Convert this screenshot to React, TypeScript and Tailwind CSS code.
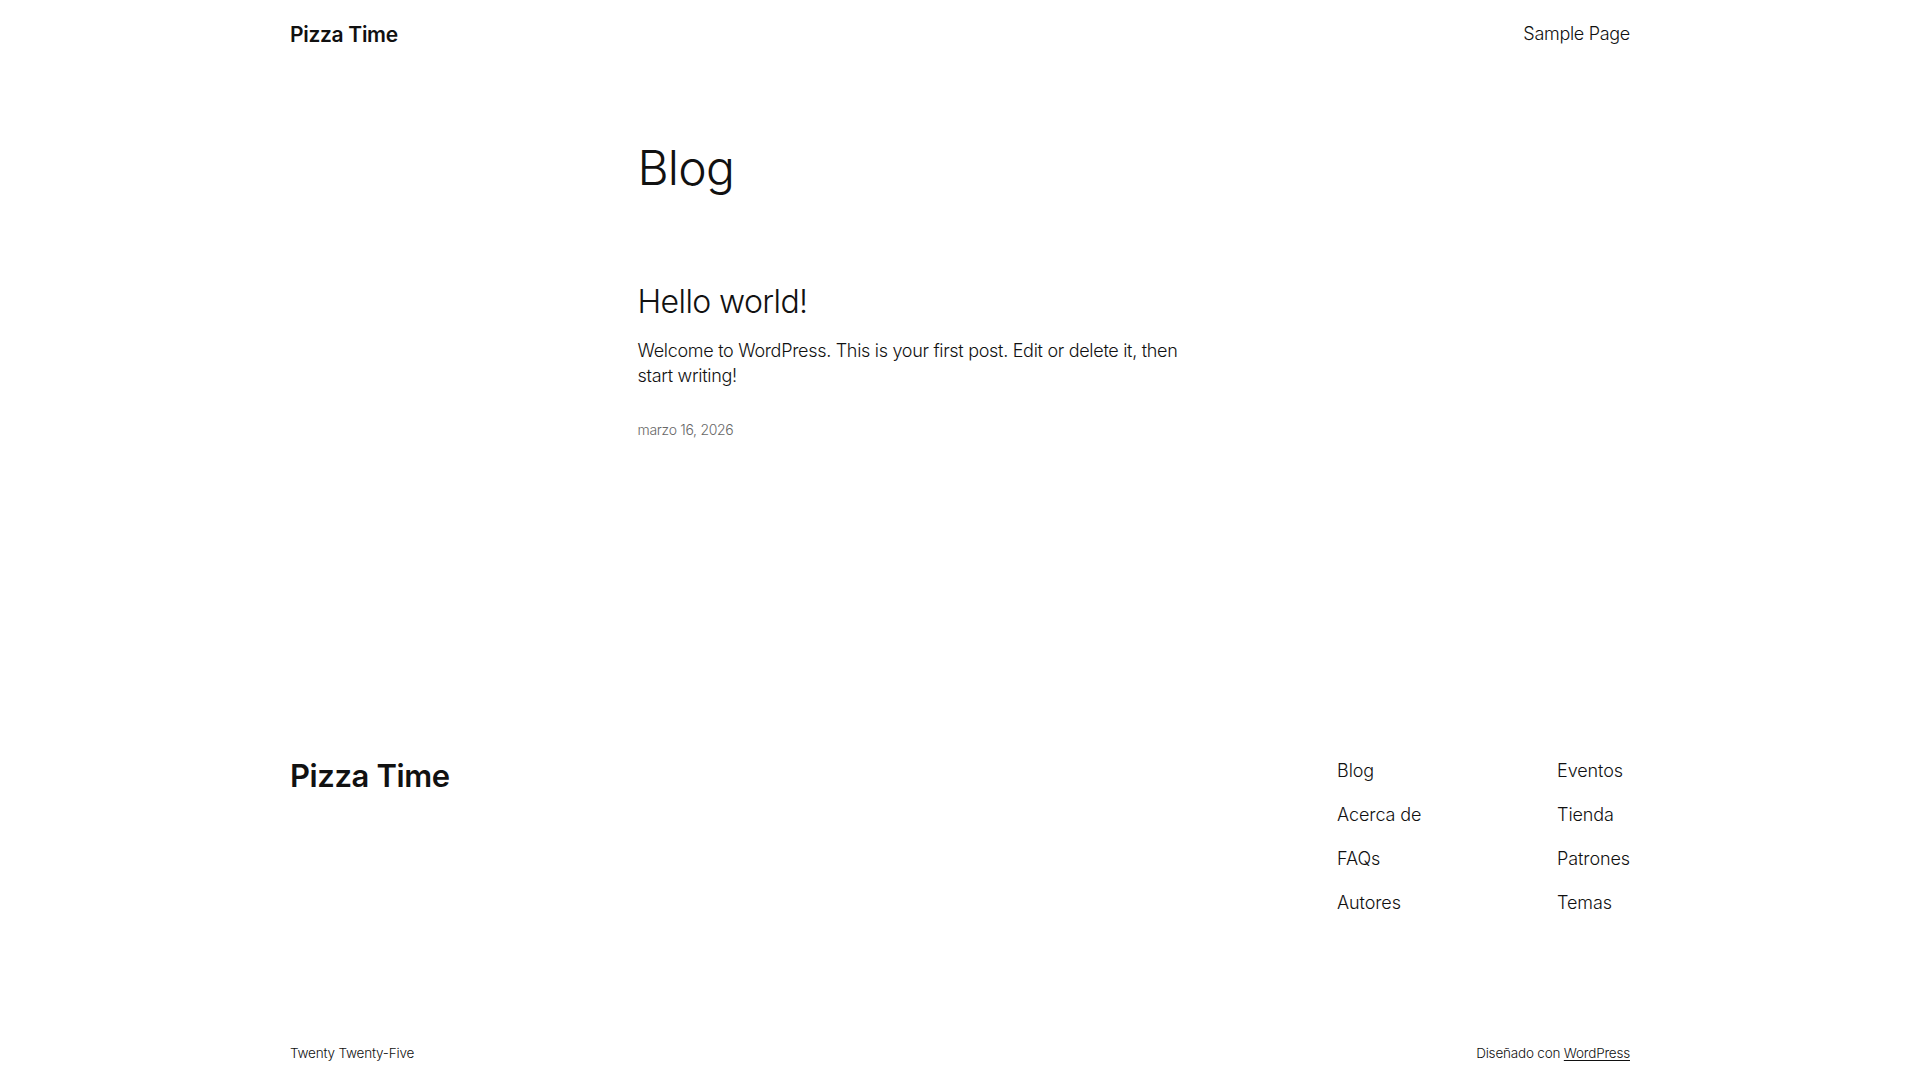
import React from "react";

const footerNav = [
  ["Blog", "Acerca de", "FAQs", "Autores"],
  ["Eventos", "Tienda", "Patrones", "Temas"],
];

export default function App() {
  return (
    <div className="min-h-screen bg-white text-[#111111] font-['Inter','Liberation_Sans',sans-serif]">
      {/* Header */}
      <header className="mx-auto flex h-[68px] w-[1340px] items-center justify-between">
        <a href="#" className="pt-[2px] text-[21px] font-semibold leading-[28px] tracking-[-0.3px]">
          Pizza Time
        </a>
        <nav>
          <a href="#" className="text-[18px] font-light leading-[28px] tracking-[-0.3px]">
            Sample Page
          </a>
        </nav>
      </header>

      {/* Main */}
      <main className="mx-auto w-[645px] pt-[71px]">
        <h1 className="text-[48px] font-light leading-[58px] tracking-[-0.8px]">Blog</h1>

        <article className="mt-[85px]">
          <h2 className="text-[32px] font-light leading-[40px] tracking-[-0.6px]">
            <a href="#">Hello world!</a>
          </h2>
          <p className="mt-[16px] w-[560px] text-[18px] font-light leading-[25px] tracking-[-0.3px]">
            Welcome to WordPress. This is your first post. Edit or delete it, then start writing!
          </p>
          <div className="mt-[32px] text-[14px] font-light leading-[20px] tracking-[-0.3px] text-[#686868]">
            marzo 16, 2026
          </div>
        </article>
      </main>

      {/* Footer */}
      <footer className="mx-auto mt-[318px] w-[1340px]">
        <div className="flex items-start justify-between">
          <a href="#" className="text-[31px] font-semibold leading-[36px] tracking-[-0.4px]">
            Pizza Time
          </a>
          <div className="flex">
            {footerNav.map((col, i) => (
              <ul key={i} className={i === 0 ? "flex w-[220px] flex-col gap-[19px]" : "flex flex-col gap-[19px]"}>
                {col.map((item) => (
                  <li key={item} className="text-[18px] font-light leading-[25px] tracking-[-0.1px]">
                    <a href="#">{item}</a>
                  </li>
                ))}
              </ul>
            ))}
          </div>
        </div>

        <div className="mt-[128px] flex items-center justify-between pb-[15px] text-[13.5px] font-light leading-[20px] tracking-[-0.2px]">
          <span>Twenty Twenty-Five</span>
          <span>
            Diseñado con{" "}
            <a href="#" className="underline underline-offset-2">
              WordPress
            </a>
          </span>
        </div>
      </footer>
    </div>
  );
}
